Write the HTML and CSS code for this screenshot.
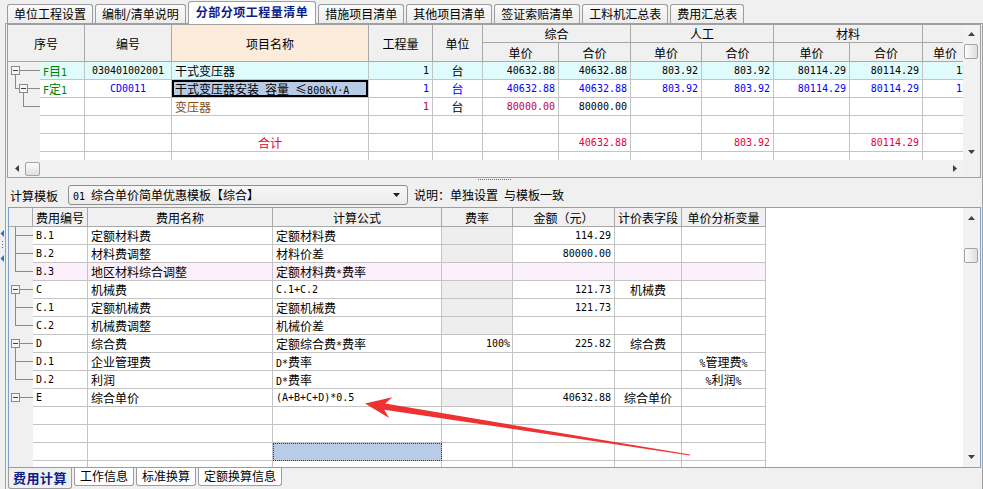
FILE: index.html
```html
<!DOCTYPE html>
<html lang="zh">
<head>
<meta charset="utf-8">
<title>分部分项工程量清单</title>
<link rel="stylesheet" href="styles.css">
</head>
<body>
<div class="tabs-top">
  <div class="tab">单位工程设置</div>
  <div class="tab">编制/清单说明</div>
  <div class="tab active">分部分项工程量清单</div>
  <div class="tab">措施项目清单</div>
  <div class="tab">其他项目清单</div>
  <div class="tab">签证索赔清单</div>
  <div class="tab">工料机汇总表</div>
  <div class="tab">费用汇总表</div>
</div>
<div class="main">
  <div class="strip">
    <svg class="strip-marks" width="5" height="34" viewBox="0 0 5 34">
      <path d="M4 0L0.5 3.5L4 7Z" fill="#2a6fd0"/>
      <rect x="2" y="11" width="1" height="1" fill="#2a6fd0"/>
      <rect x="2" y="14" width="1" height="1" fill="#2a6fd0"/>
      <rect x="2" y="17" width="1" height="1" fill="#2a6fd0"/>
      <path d="M4 25L0.5 28.5L4 32Z" fill="#2a6fd0"/>
    </svg>
  </div>
  <div class="page">
    <div class="upper">
      <div class="view">
        <div class="ugrid">
          <div class="h seq">序号</div>
          <div class="h rs2">编号</div>
          <div class="h rs2 peach">项目名称</div>
          <div class="h rs2">工程量</div>
          <div class="h rs2">单位</div>
          <div class="h cs2">综合</div>
          <div class="h cs2">人工</div>
          <div class="h cs2">材料</div>
          <div class="h"></div>
          <div class="h">单价</div><div class="h">合价</div>
          <div class="h">单价</div><div class="h">合价</div>
          <div class="h">单价</div><div class="h">合价</div>
          <div class="h cut">单价</div>

          <div class="utree">
            <svg width="32" height="97" viewBox="0 0 32 97">
              <g stroke="#8a8a8a" fill="none" shape-rendering="crispEdges">
                <path d="M12 8.5H32 M7.5 13V26.5H11 M20 26.5H32 M15.5 31V44.5H32"/>
                <rect x="3.5" y="4.5" width="8" height="8" fill="#f6f6f6"/>
                <rect x="11.5" y="22.5" width="8" height="8" fill="#f6f6f6"/>
              </g>
              <path d="M5 8.5h5 M13 26.5h5" stroke="#404040" shape-rendering="crispEdges"/>
            </svg>
          </div>

          <div class="d cy green"><span class="m">F</span>目<span class="m">1</span></div>
          <div class="d cy ctr m">030401002001</div>
          <div class="d cy">干式变压器</div>
          <div class="d cy r m">1</div>
          <div class="d cy ctr">台</div>
          <div class="d cy r m">40632.88</div>
          <div class="d cy r m">40632.88</div>
          <div class="d cy r m">803.92</div>
          <div class="d cy r m">803.92</div>
          <div class="d cy r m">80114.29</div>
          <div class="d cy r m">80114.29</div>
          <div class="d cy m cutv">121.73</div>

          <div class="d green"><span class="m">F</span>定<span class="m">1</span></div>
          <div class="d ctr m blue">CD0011</div>
          <div class="d sel">干式变压器安装<span class="m"> </span>容量<span class="m"> </span>≤<span class="m">800kV·A</span></div>
          <div class="d r m blue">1</div>
          <div class="d ctr blue">台</div>
          <div class="d r m blue">40632.88</div>
          <div class="d r m blue">40632.88</div>
          <div class="d r m blue">803.92</div>
          <div class="d r m blue">803.92</div>
          <div class="d r m blue">80114.29</div>
          <div class="d r m blue">80114.29</div>
          <div class="d m blue cutv">121.73</div>

          <div class="d"></div>
          <div class="d"></div>
          <div class="d brown">变压器</div>
          <div class="d r m crim">1</div>
          <div class="d ctr">台</div>
          <div class="d r m crim">80000.00</div>
          <div class="d r m">80000.00</div>
          <div class="d"></div><div class="d"></div><div class="d"></div><div class="d"></div><div class="d"></div>

          <div class="d"></div><div class="d"></div><div class="d"></div><div class="d"></div><div class="d"></div><div class="d"></div>
          <div class="d"></div><div class="d"></div><div class="d"></div><div class="d"></div><div class="d"></div><div class="d"></div>

          <div class="d"></div>
          <div class="d"></div>
          <div class="d ctr red">合计</div>
          <div class="d"></div>
          <div class="d"></div>
          <div class="d"></div>
          <div class="d r m red">40632.88</div>
          <div class="d"></div>
          <div class="d r m red">803.92</div>
          <div class="d"></div>
          <div class="d r m red">80114.29</div>
          <div class="d"></div>

          <div class="d"></div><div class="d"></div><div class="d"></div><div class="d"></div><div class="d"></div><div class="d"></div>
          <div class="d"></div><div class="d"></div><div class="d"></div><div class="d"></div><div class="d"></div><div class="d"></div>
        </div>
      </div>
      <div class="vs vs-up">
        <div class="sa"><svg width="7" height="4" viewBox="0 0 7 4"><path d="M0 4L3.5 0L7 4Z" fill="#404040"/></svg></div>
        <div class="thumb-v"></div>
        <div class="track"></div>
        <div class="sa"><svg width="7" height="4" viewBox="0 0 7 4"><path d="M0 0L3.5 4L7 0Z" fill="#404040"/></svg></div>
      </div>
      <div class="hs">
        <div class="sah"><svg width="4" height="7" viewBox="0 0 4 7"><path d="M4 0L0 3.5L4 7Z" fill="#404040"/></svg></div>
        <div class="thumb-h"></div>
        <div class="track"></div>
        <div class="sah"><svg width="4" height="7" viewBox="0 0 4 7"><path d="M0 0L4 3.5L0 7Z" fill="#404040"/></svg></div>
      </div>
      <div class="corner"></div>
    </div>

    <div class="splitter"><div class="dots"></div></div>

    <div class="tpl">
      <div class="tpl-label">计算模板</div>
      <div class="select"><span class="seltext"><span class="m">01 </span>综合单价简单优惠模板【综合】</span><svg class="dd" width="7" height="4" viewBox="0 0 7 4"><path d="M0 0L3.5 4L7 0Z" fill="#202020"/></svg></div>
      <div class="note">说明：单独设置<span class="m"> </span>与模板一致</div>
    </div>

    <div class="lower">
      <div class="view">
        <div class="lgrid">
          <div class="lh"></div>
          <div class="lh">费用编号</div>
          <div class="lh">费用名称</div>
          <div class="lh">计算公式</div>
          <div class="lh">费率</div>
          <div class="lh">金额（元）</div>
          <div class="lh">计价表字段</div>
          <div class="lh">单价分析变量</div>
          <div class="rest"></div>
          <div class="ltree">
            <svg width="24" height="246" viewBox="0 0 24 246">
              <g stroke="#8a8a8a" fill="none" shape-rendering="crispEdges">
                <path d="M6.5 0V44.5 M6.5 8.5H24 M6.5 26.5H24 M6.5 44.5H24"/>
                <path d="M11 62.5H24 M6.5 67V98.5 M6.5 80.5H24 M6.5 98.5H24"/>
                <path d="M11 116.5H24 M6.5 121V152.5 M6.5 134.5H24 M6.5 152.5H24"/>
                <path d="M11 170.5H24"/>
                <rect x="2.5" y="58.5" width="8" height="8" fill="#f6f6f6"/>
                <rect x="2.5" y="112.5" width="8" height="8" fill="#f6f6f6"/>
                <rect x="2.5" y="166.5" width="8" height="8" fill="#f6f6f6"/>
              </g>
              <path d="M4 62.5h5 M4 116.5h5 M4 170.5h5" stroke="#404040" shape-rendering="crispEdges"/>
            </svg>
          </div>

          <div class="e m">B.1</div><div class="e">定额材料费</div><div class="e">定额材料费</div><div class="e g"></div><div class="e r m">114.29</div><div class="e"></div><div class="e"></div>
          <div class="e m">B.2</div><div class="e">材料费调整</div><div class="e">材料价差</div><div class="e g"></div><div class="e r m">80000.00</div><div class="e"></div><div class="e"></div>
          <div class="e pk m">B.3</div><div class="e pk">地区材料综合调整</div><div class="e pk">定额材料费<span class="m">*</span>费率</div><div class="e pk"></div><div class="e pk"></div><div class="e pk"></div><div class="e pk"></div>
          <div class="e m">C</div><div class="e">机械费</div><div class="e m">C.1+C.2</div><div class="e g"></div><div class="e r m">121.73</div><div class="e ctr">机械费</div><div class="e"></div>
          <div class="e m">C.1</div><div class="e">定额机械费</div><div class="e">定额机械费</div><div class="e g"></div><div class="e r m">121.73</div><div class="e"></div><div class="e"></div>
          <div class="e m">C.2</div><div class="e">机械费调整</div><div class="e">机械价差</div><div class="e g"></div><div class="e"></div><div class="e"></div><div class="e"></div>
          <div class="e m">D</div><div class="e">综合费</div><div class="e">定额综合费<span class="m">*</span>费率</div><div class="e r m rate">100%</div><div class="e r m">225.82</div><div class="e ctr">综合费</div><div class="e"></div>
          <div class="e m">D.1</div><div class="e">企业管理费</div><div class="e"><span class="m">D*</span>费率</div><div class="e"></div><div class="e"></div><div class="e"></div><div class="e ctr"><span class="m">%</span>管理费<span class="m">%</span></div>
          <div class="e m">D.2</div><div class="e">利润</div><div class="e"><span class="m">D*</span>费率</div><div class="e"></div><div class="e"></div><div class="e"></div><div class="e ctr"><span class="m">%</span>利润<span class="m">%</span></div>
          <div class="e m">E</div><div class="e">综合单价</div><div class="e m">(A+B+C+D)*0.5</div><div class="e g"></div><div class="e r m">40632.88</div><div class="e ctr">综合单价</div><div class="e"></div>

          <div class="e"></div><div class="e"></div><div class="e"></div><div class="e"></div><div class="e"></div><div class="e"></div><div class="e"></div>
          <div class="e"></div><div class="e"></div><div class="e"></div><div class="e"></div><div class="e"></div><div class="e"></div><div class="e"></div>
          <div class="e"></div><div class="e"></div><div class="e focus"></div><div class="e"></div><div class="e"></div><div class="e"></div><div class="e"></div>
          <div class="e"></div><div class="e"></div><div class="e"></div><div class="e"></div><div class="e"></div><div class="e"></div><div class="e"></div>
        </div>
      </div>
      <div class="vs vs-low">
        <div class="sa"><svg width="7" height="4" viewBox="0 0 7 4"><path d="M0 4L3.5 0L7 4Z" fill="#404040"/></svg></div>
        <div class="thumb-v"></div>
        <div class="track"></div>
        <div class="sa"><svg width="7" height="4" viewBox="0 0 7 4"><path d="M0 0L3.5 4L7 0Z" fill="#404040"/></svg></div>
      </div>
    </div>

    <div class="btabs">
      <div class="btab active">费用计算</div>
      <div class="btab">工作信息</div>
      <div class="btab">标准换算</div>
      <div class="btab">定额换算信息</div>
    </div>
  </div>
</div>

<svg class="arrow" width="983" height="489" viewBox="0 0 983 489">
  <polygon points="365,403.5 392.3,397.2 385.2,403.6 690,454.6 690,455.4 384.3,409.8 389.1,418" fill="#ee3232"/>
</svg>
</body>
</html>
```
FILE: styles.css
```css
* { box-sizing: border-box; }
html, body { margin: 0; padding: 0; }
body {
  width: 983px;
  height: 489px;
  overflow: hidden;
  position: relative;
  background: #f0f0f0;
  color: #000;
  font-family: "Noto Sans CJK SC", "Noto Sans", sans-serif;
  font-size: 12px;
  line-height: 17px;
}
.m { font-family: "DejaVu Sans Mono", "Liberation Mono", monospace; font-size: 10px; }

/* top tabs */
.tabs-top {
  display: flex;
  align-items: flex-end;
  gap: 2px;
  height: 23px;
  padding-left: 7px;
}
.tab {
  height: 19px;
  line-height: 17px;
  padding: 0 6px;
  border: 1px solid #9c9c9c;
  border-bottom: none;
  border-radius: 3px 3px 0 0;
  background: linear-gradient(#fafafa, #ececec);
  white-space: nowrap;
}
.tab.active {
  height: 23px;
  margin-bottom: -1px;
  position: relative;
  z-index: 1;
  background: #fff;
  color: #0b1c8c;
  font-weight: bold;
  letter-spacing: 0.5px;
  padding: 0 7px;
  line-height: 20px;
}

.main { display: flex; height: 466px; }
.strip { width: 5px; flex: none; }
.strip-marks { display: block; margin-top: 207px; }
.page {
  width: 978px;
  border: 1px solid #a0a0a0;
  border-bottom: none;
  display: flex;
  flex-direction: column;
}

/* upper grid */
.upper {
  margin-left: 1px;
  width: 974px;
  height: 154px;
  flex: none;
  border: 1px solid #a0a0a0;
  display: grid;
  grid-template-columns: 955px 17px;
  grid-template-rows: 135px 17px;
  background: #fff;
}
.view { overflow: hidden; }
.ugrid {
  display: grid;
  grid-template-columns: 32px 45px 87px 197px 64px 50px 76px 72px 71px 72px 76px 73px 76px;
  grid-template-rows: 18px 19px repeat(6, 18px);
  width: max-content;
}
.h {
  background: #f0f0f0;
  border-right: 1px solid #a8a8a8;
  border-bottom: 1px solid #a8a8a8;
  display: flex;
  align-items: center;
  justify-content: center;
  white-space: nowrap;
  overflow: hidden;
}
.h.seq { grid-column: span 2; grid-row: span 2; }
.h.rs2 { grid-row: span 2; }
.h.cs2 { grid-column: span 2; }
.h.peach { background: #fdebdc; }
.h.cut { justify-content: flex-start; padding-left: 10px; }
.utree { grid-column: 1; grid-row: 3 / span 6; background: #f0f0f0; }
.utree svg, .ltree svg { display: block; }
.d {
  border-right: 1px solid #c4c4c4;
  border-bottom: 1px solid #c4c4c4;
  padding: 0 3px;
  line-height: 17px;
  white-space: nowrap;
  overflow: hidden;
}
.r { text-align: right; }
.ctr { text-align: center; }
.cy { background: #e0fbfb; }
.cutv { padding-left: 33px; }
.sel { background: #b8cce6; box-shadow: inset 0 0 0 2px #000; }
.green { color: #008000; }
.blue { color: #0000ff; }
.brown { color: #8a4b08; }
.crim { color: #c0004e; }
.red { color: #e8003c; }

/* scrollbars */
.vs { display: flex; flex-direction: column; background: #f2f2f2; }
.sa { height: 17px; flex: none; display: flex; align-items: center; justify-content: center; }
.sa svg, .sah svg { display: block; }
.track { flex: 1; }
.thumb-v {
  width: 14px;
  height: 15px;
  margin-left: 1px;
  flex: none;
  border: 1px solid #a4a4a4;
  border-radius: 2px;
  background: linear-gradient(to right, #fdfdfd, #dedede);
}
.vs-up .thumb-v { margin-top: 2px; }
.vs-low .sa { height: 20px; }
.vs-low .thumb-v { margin-top: 20px; }
.hs { display: flex; align-items: center; background: #f2f2f2; }
.sah { width: 17px; height: 17px; flex: none; display: flex; align-items: center; justify-content: center; }
.thumb-h {
  width: 15px;
  height: 14px;
  flex: none;
  border: 1px solid #a4a4a4;
  border-radius: 2px;
  background: linear-gradient(#fdfdfd, #dedede);
}
.corner { background: #f0f0f0; }

/* splitter */
.splitter { height: 5px; flex: none; display: flex; justify-content: center; padding-top: 1px; }
.dots { width: 33px; height: 1px; border-top: 1px dotted #6a6a6a; }

/* template row */
.tpl { height: 24px; flex: none; display: flex; align-items: center; padding-left: 4px; }
.tpl-label { width: 58px; }
.select {
  width: 340px;
  height: 20px;
  border: 1px solid #8e8e8e;
  border-radius: 3px;
  background: linear-gradient(#f7f7f7, #ebebeb);
  display: flex;
  align-items: center;
  padding-left: 4px;
  white-space: nowrap;
}
.seltext { white-space: pre; }
.select .dd { margin-left: auto; margin-right: 7px; flex: none; }
.note { margin-left: 6px; white-space: pre; }

/* lower grid */
.lower {
  margin-left: 2px;
  width: 973px;
  height: 261px;
  flex: none;
  border: 1px solid #7da2ce;
  display: grid;
  grid-template-columns: 954px 17px;
  background: #fff;
}
.lgrid {
  display: grid;
  grid-template-columns: 24px 55px 185px 169px 71px 102px 67px 84px 197px;
  grid-template-rows: 19px repeat(14, 18px);
  width: max-content;
}
.lh {
  background: #f0f0f0;
  border-right: 1px solid #a8a8a8;
  border-bottom: 1px solid #a8a8a8;
  display: flex;
  align-items: center;
  justify-content: center;
  white-space: nowrap;
}
.rest { grid-column: 9; grid-row: 1 / -1; background: #fff; }
.ltree { grid-column: 1; grid-row: 2 / span 14; background: #f0f0f0; }
.e {
  border-right: 1px solid #c4c4c4;
  border-bottom: 1px solid #c4c4c4;
  padding: 0 3px;
  line-height: 17px;
  white-space: nowrap;
  overflow: hidden;
}
.e.rate { padding-right: 2px; }
.g { background: #eeeeee; }
.pk { background: #fcf0fc; }
.focus { background: #b8cce8; outline: 1px dotted #333; outline-offset: -1px; }

/* bottom tabs */
.btabs { display: flex; gap: 2px; margin-left: 2px; height: 21px; flex: none; align-items: flex-start; }
.btab {
  height: 18px;
  line-height: 16px;
  padding: 0 5px;
  border: 1px solid #9c9c9c;
  border-top: none;
  border-radius: 0 0 3px 3px;
  background: #fff;
  white-space: nowrap;
}
.btab.active {
  height: 21px;
  background: #f0f0f0;
  color: #0b1c8c;
  font-weight: bold;
  font-size: 13px;
  letter-spacing: 0.5px;
  padding: 0 4px;
  line-height: 19px;
}

.arrow { position: absolute; left: 0; top: 0; pointer-events: none; }
```
